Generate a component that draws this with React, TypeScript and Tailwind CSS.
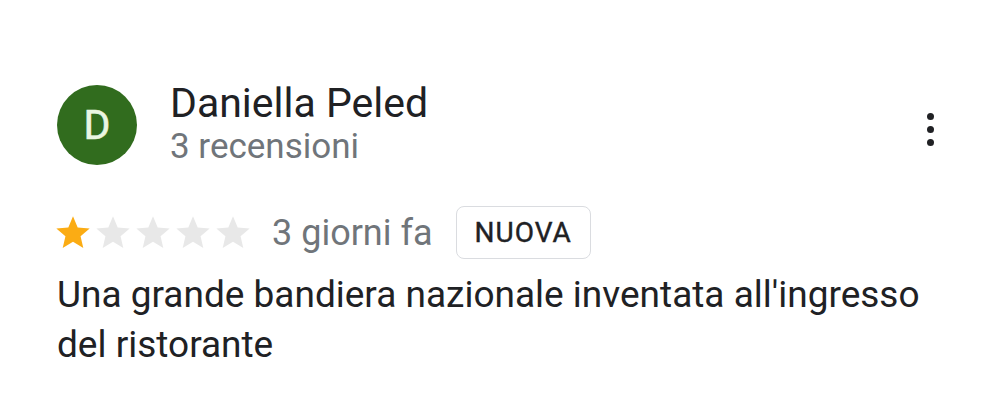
import React from 'react';

const Star: React.FC<{ filled: boolean }> = ({ filled }) => (
  <svg viewBox="0 0 24 24" className="w-10 h-10 shrink-0">
    <path
      d="M12 17.27L18.18 21l-1.64-7.03L22 9.24l-7.19-.61L12 2 9.19 8.63 2 9.24l5.46 4.73L5.82 21z"
      fill={filled ? '#fbac14' : '#e8e8e8'}
    />
  </svg>
);

const App: React.FC = () => {
  const rating = 1;

  return (
    <div className="w-[1000px] h-[408px] bg-white overflow-hidden font-['Roboto',sans-serif]">
      <div className="pl-[57px] pr-[66px] pt-[79px]">
        {/* Author */}
        <div className="flex items-start">
          <div className="w-20 h-20 mt-[6px] rounded-full bg-[#316c1e] flex items-center justify-center shrink-0">
            <span className="text-[41px] leading-none text-[#eaf6e2] [-webkit-text-stroke:0.6px_#eaf6e2]">D</span>
          </div>
          <div className="ml-[33px] flex-1">
            <div className="text-[41px] leading-[48px] text-[#202124]">Daniella Peled</div>
            <div className="text-[35px] leading-[40px] text-[#70757a]">3 recensioni</div>
          </div>
          <div className="mt-[34px] flex flex-col items-center gap-[6px] w-2">
            <span className="w-[7px] h-[7px] rounded-full bg-[#202124]" />
            <span className="w-[7px] h-[7px] rounded-full bg-[#202124]" />
            <span className="w-[7px] h-[7px] rounded-full bg-[#202124]" />
          </div>
        </div>

        {/* Rating row */}
        <div className="flex items-center mt-[39px]">
          <div className="flex -ml-1">
            {[1, 2, 3, 4, 5].map(i => (
              <Star key={i} filled={i <= rating} />
            ))}
          </div>
          <span className="ml-[19px] text-[36px] leading-[44px] text-[#70757a]">3 giorni fa</span>
          <span className="ml-[23px] h-[53px] px-[18px] flex items-center rounded-lg border border-[#dadce0] text-[28px] tracking-[1px] text-[#202124] [-webkit-text-stroke:0.4px_#202124]">
            NUOVA
          </span>
        </div>

        {/* Review body */}
        <p className="mt-[11px] text-[37px] leading-[50px] text-[#202124] max-w-[880px]">
          Una grande bandiera nazionale inventata all'ingresso del ristorante
        </p>
      </div>
    </div>
  );
};

export default App;
